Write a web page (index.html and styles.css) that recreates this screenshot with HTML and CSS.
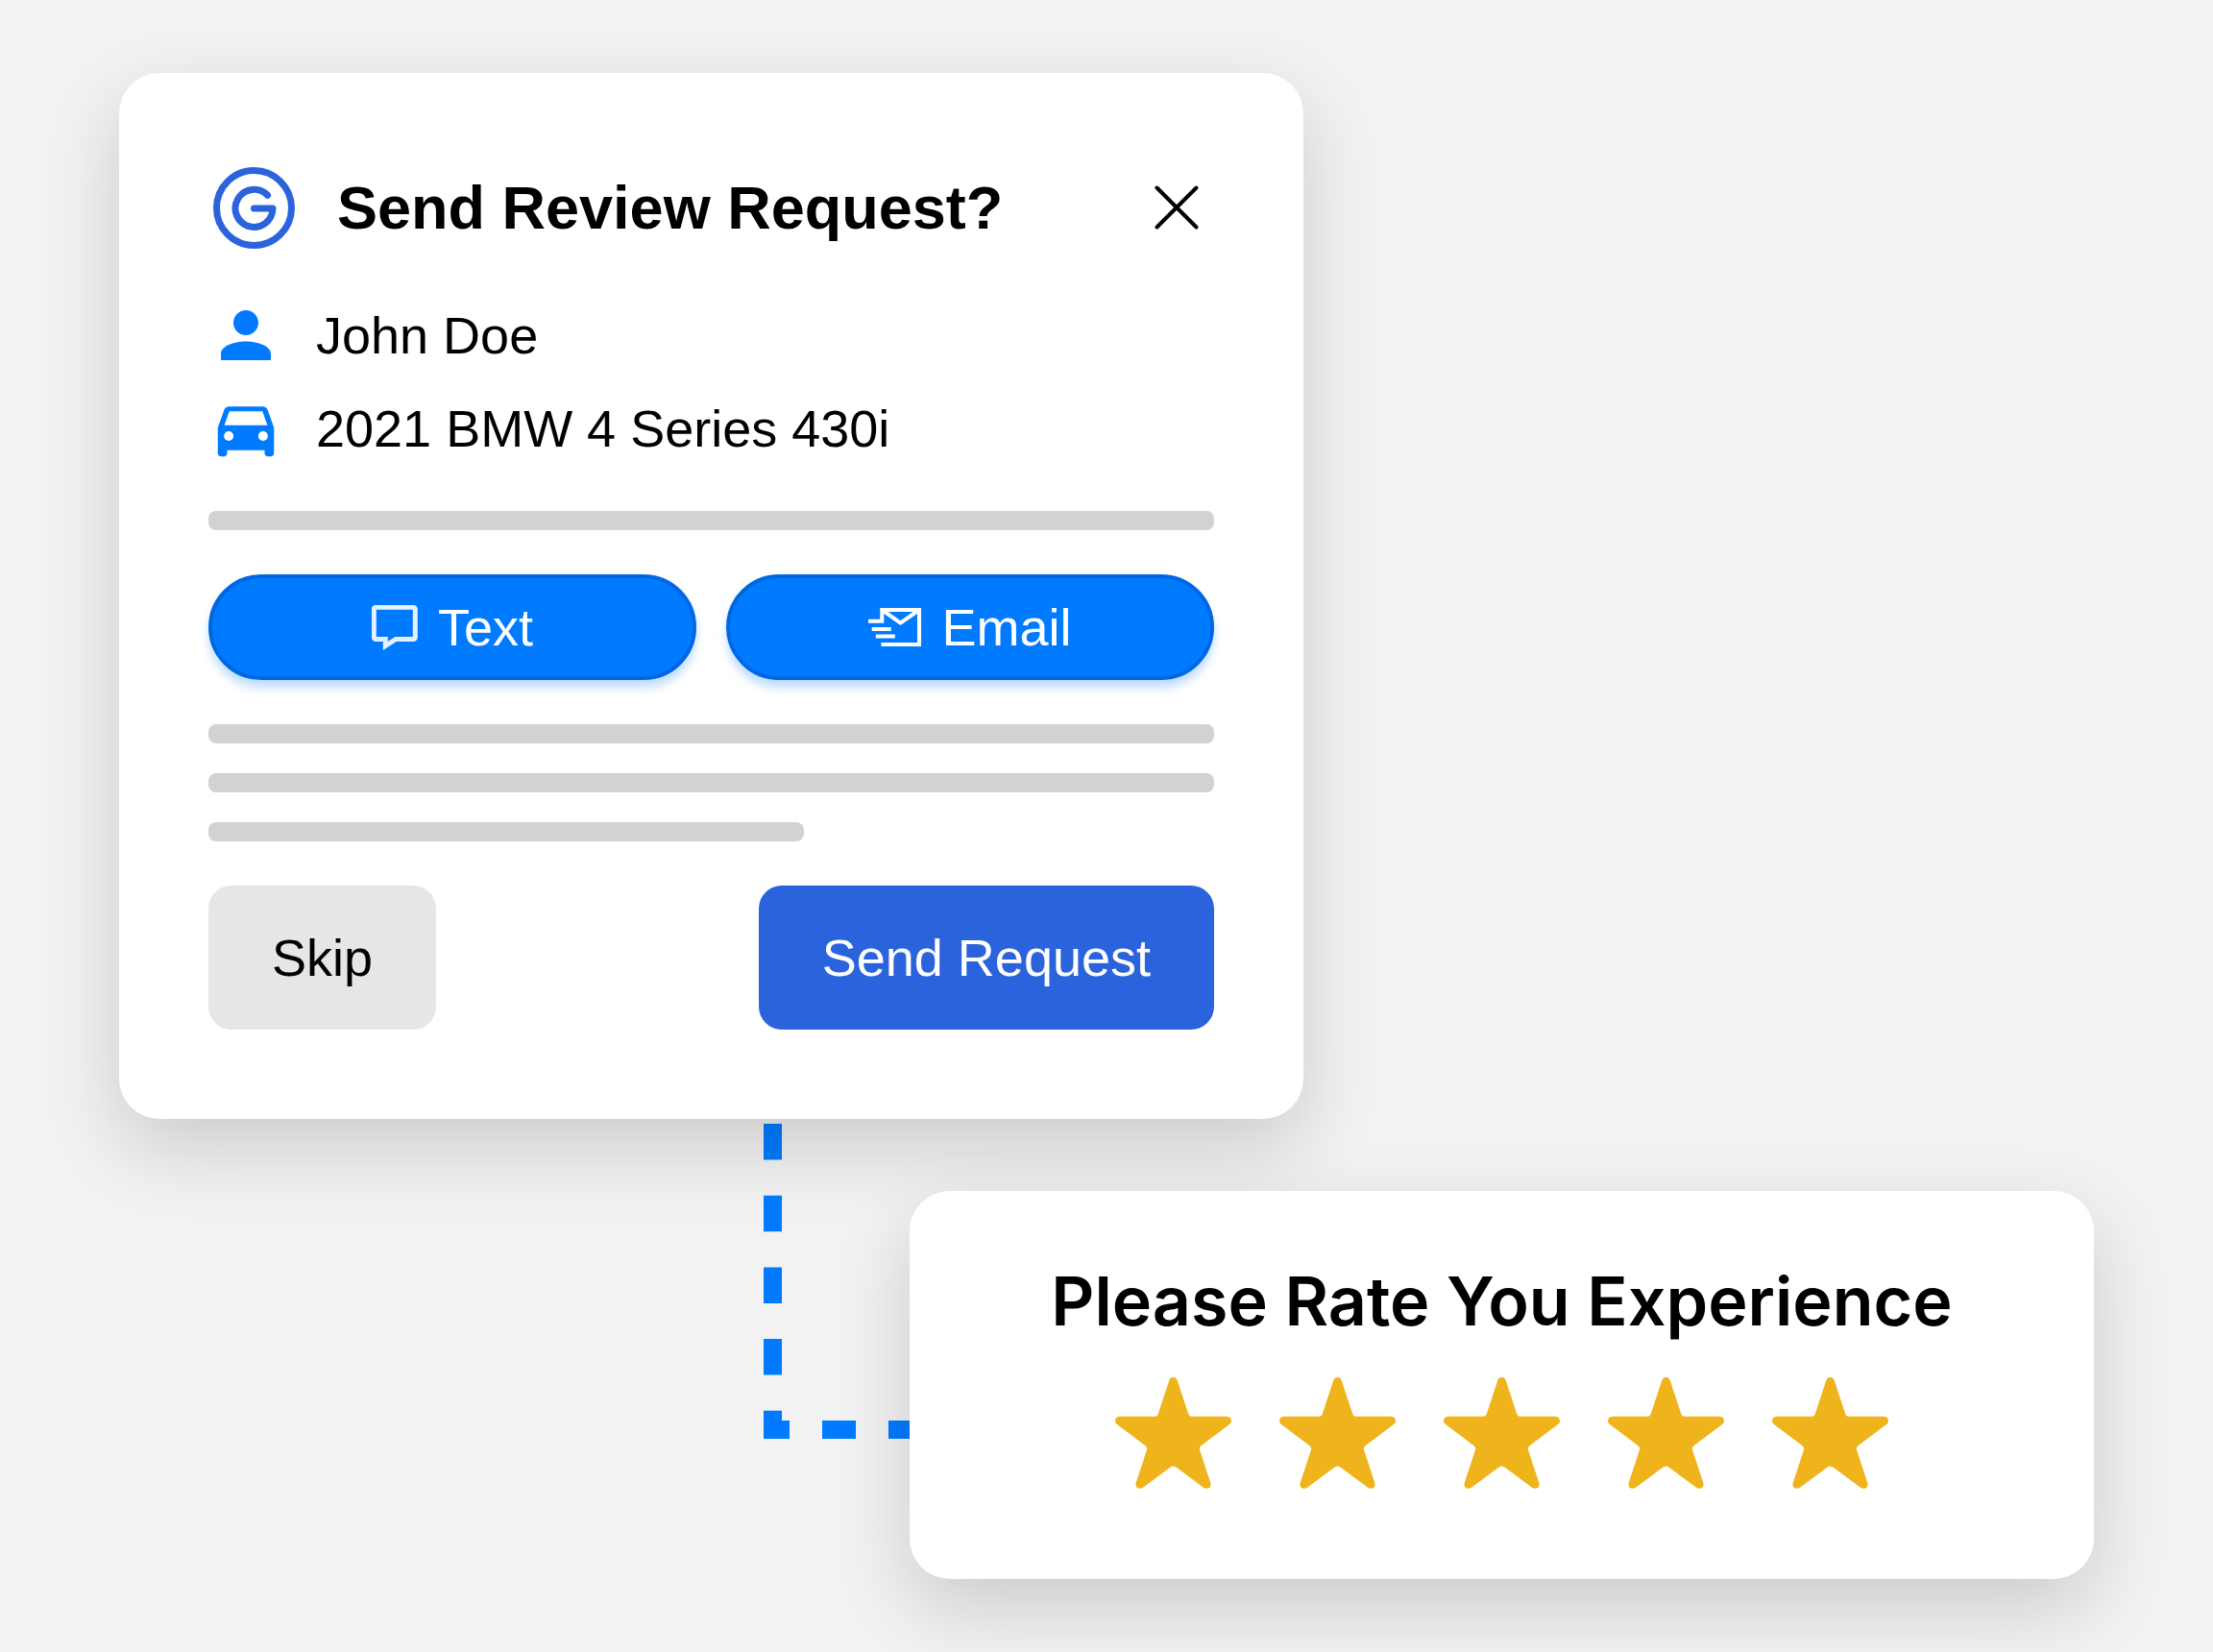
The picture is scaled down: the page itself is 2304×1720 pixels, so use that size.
FILE: index.html
```html
<!DOCTYPE html>
<html lang="en">
<head>
<meta charset="utf-8">
<meta name="viewport" content="width=device-width, initial-scale=1">
<title>Send Review Request</title>
<link rel="stylesheet" href="styles.css">
</head>
<body>
<main class="page">
  <section class="card request" aria-labelledby="request-title">
    <header class="request-header">
      <svg class="logo" viewBox="0 0 85 85" aria-hidden="true">
        <circle cx="42.5" cy="42.5" r="39"/>
        <path d="M56.5 29.3A19.5 19.5 0 1 0 62 43H42.5"/>
      </svg>
      <h1 class="request-title" id="request-title">Send Review Request?</h1>
      <button class="close" type="button" aria-label="Close">
        <svg viewBox="0 0 46 46" aria-hidden="true"><path d="M2.5 2.5l41 41M43.5 2.5l-41 41"/></svg>
      </button>
    </header>

    <ul class="details">
      <li class="detail">
        <svg class="detail-icon" viewBox="0 0 24 24" aria-hidden="true"><path d="M12 12c2.21 0 4-1.79 4-4s-1.79-4-4-4-4 1.79-4 4 1.79 4 4 4zm0 2c-4 0-8 1.5-8 4v2h16v-2c0-2.5-4-4-8-4z"/></svg>
        <span>John Doe</span>
      </li>
      <li class="detail">
        <svg class="detail-icon" viewBox="0 0 24 24" aria-hidden="true"><path fill-rule="evenodd" d="M18.92 6.01C18.72 5.42 18.16 5 17.5 5h-11c-.66 0-1.21.42-1.42 1.01L3 11.8V20c0 .55.45 1 1 1h1c.55 0 1-.45 1-1v-1h12v1c0 .55.45 1 1 1h1c.55 0 1-.45 1-1v-8.2zM6.5 16a1.55 1.55 0 1 1 0-3.1 1.55 1.55 0 0 1 0 3.1zm11 0a1.55 1.55 0 1 1 0-3.1 1.55 1.55 0 0 1 0 3.1zM5.1 11l1.6-4.5h10.6l1.6 4.5z"/></svg>
        <span>2021 BMW 4 Series 430i</span>
      </li>
    </ul>

    <div class="line"></div>

    <div class="channels">
      <button class="channel" type="button">
        <svg class="text-icon" viewBox="0 0 48 47" aria-hidden="true"><path d="M4.3 2.3h39a2 2 0 0 1 2 2v29.2a2 2 0 0 1-2 2H25L14.3 42.5v-7H4.3a2 2 0 0 1-2-2V4.3a2 2 0 0 1 2-2z"/></svg>
        <span>Text</span>
      </button>
      <button class="channel" type="button">
        <svg class="email-icon" viewBox="0 0 55 40" aria-hidden="true"><path d="M0 13.8h14.3V2H53v36H13.5M14.3 2L33.5 15.6 53 2M3.7 22h20M7.8 29.6h20"/></svg>
        <span>Email</span>
      </button>
    </div>

    <div class="lines">
      <div class="line"></div>
      <div class="line"></div>
      <div class="line line-short"></div>
    </div>

    <footer class="actions">
      <button class="action skip" type="button">Skip</button>
      <button class="action send" type="button">Send Request</button>
    </footer>
  </section>

  <section class="card rating" aria-labelledby="rating-title">
    <svg class="connector" viewBox="0 0 152 328" aria-hidden="true">
      <path d="M9.5 0v328" stroke-dasharray="37.5 37.2"/>
      <path d="M0 318.5h27M61 318.5h35M130 318.5h22"/>
    </svg>
    <h2 class="rating-title" id="rating-title">Please Rate You Experience</h2>
    <div class="stars">
      <button class="star" type="button" aria-label="1 star"><svg viewBox="0 0 121 116" aria-hidden="true"><path id="star" d="M56 4Q57 0 60.5 0T65 4L76.4 38.5Q77.2 40.7 79.5 40.7H116Q121 41 121 45.5 121 47.5 119 49L89.5 71.3Q87.3 73 88 75.5L99.5 110.5Q100 115.7 95 115.7 93.3 115.7 92 114.8L63 93.3Q60.5 91.5 58 93.3L29 114.8Q27.7 115.7 26 115.7 21 115.7 21.5 110.5L33 75.5Q33.7 73 31.5 71.3L2 49Q0 47.5 0 45.5 0 41 5 40.7H41.5Q43.8 40.7 44.6 38.5Z"/></svg></button>
      <button class="star" type="button" aria-label="2 stars"><svg viewBox="0 0 121 116" aria-hidden="true"><use href="#star"/></svg></button>
      <button class="star" type="button" aria-label="3 stars"><svg viewBox="0 0 121 116" aria-hidden="true"><use href="#star"/></svg></button>
      <button class="star" type="button" aria-label="4 stars"><svg viewBox="0 0 121 116" aria-hidden="true"><use href="#star"/></svg></button>
      <button class="star" type="button" aria-label="5 stars"><svg viewBox="0 0 121 116" aria-hidden="true"><use href="#star"/></svg></button>
    </div>
  </section>
</main>
</body>
</html>
```
FILE: styles.css
```css
:root {
  --blue: #007bff;
  --blue-edge: #0067e2;
  --royal: #2b63dc;
  --gold: #efb41b;
  --line: #d2d2d2;
}

* {
  box-sizing: border-box;
}

body {
  margin: 0;
  background: #f2f2f2;
  color: #000;
  font-family: "Liberation Sans", Arial, sans-serif;
  font-size: 54px;
  line-height: 80px;
}

button {
  border: 0;
  padding: 0;
  background: none;
  color: inherit;
  font: inherit;
  cursor: pointer;
}

svg {
  display: block;
  flex: none;
}

.page {
  display: flex;
  flex-direction: column;
  gap: 75px;
  min-height: 100vh;
  padding: 76px 124px;
  isolation: isolate;
}

.card {
  width: 60%;
  max-width: 1233px;
  border-radius: 42px;
  background: #fff;
  box-shadow: 0 30px 80px rgba(0, 0, 0, 0.16);
}

/* Request dialog */

.request {
  display: flex;
  flex-direction: column;
  gap: 46px;
  padding: 93px;
}

.request-header {
  display: flex;
  align-items: center;
  gap: 44px;
  height: 94px;
  padding: 0 16px 0 5px;
}

.logo {
  width: 85px;
  height: 85px;
  fill: none;
  stroke: var(--royal);
  stroke-width: 7;
  stroke-linecap: round;
  stroke-linejoin: round;
}

.request-title {
  margin: 0;
  font-size: 63px;
  font-weight: 700;
}

.close {
  margin-left: auto;
}

.close svg {
  width: 46px;
  height: 46px;
  fill: none;
  stroke: #000;
  stroke-width: 4;
  stroke-linecap: round;
}

.details {
  display: flex;
  flex-direction: column;
  gap: 17px;
  margin: 0;
  padding: 0;
  list-style: none;
}

.detail {
  display: flex;
  align-items: center;
  gap: 34px;
}

.detail-icon {
  width: 78px;
  height: 78px;
  fill: var(--blue);
}

.line {
  height: 20px;
  border-radius: 8px;
  background: var(--line);
}

.lines {
  display: flex;
  flex-direction: column;
  gap: 31px;
}

.line-short {
  width: 620px;
}

.channels {
  display: grid;
  grid-template-columns: 1fr 1fr;
  gap: 31px;
}

.channel {
  display: flex;
  align-items: center;
  justify-content: center;
  gap: 21px;
  height: 110px;
  border: 4px solid var(--blue-edge);
  border-radius: 55px;
  background: var(--blue);
  box-shadow: 0 8px 10px rgba(0, 123, 255, 0.26);
  color: #fff;
}

.text-icon,
.email-icon {
  fill: none;
  stroke: #fff;
  stroke-width: 4;
}

.text-icon {
  width: 48px;
  height: 47px;
  stroke: #e6f1ff;
  stroke-width: 5;
}

.email-icon {
  width: 55px;
  height: 40px;
}

.actions {
  display: flex;
  justify-content: space-between;
}

.action {
  height: 150px;
  padding: 0 66px;
  border-radius: 24px;
}

.skip {
  background: #e6e6e6;
}

.send {
  background: var(--royal);
  color: #fff;
}

/* Rating prompt */

.rating {
  position: relative;
  align-self: flex-end;
  padding: 75px 93px 94px;
}

/* Dashed path from the dialog, drawn beneath both card shadows */
.connector {
  position: absolute;
  z-index: -1;
  top: -70px;
  right: 100%;
  width: 152px;
  height: 328px;
  fill: none;
  stroke: var(--blue);
  stroke-width: 19;
}

.rating-title {
  margin: 0 0 39px;
  font-family: Inter, sans-serif;
  font-size: 70px;
  font-weight: 600;
  line-height: 80px;
  text-align: center;
}

.stars {
  display: flex;
  justify-content: center;
  gap: 50px;
}

.star svg {
  width: 121px;
  height: 116px;
  fill: var(--gold);
}
```
